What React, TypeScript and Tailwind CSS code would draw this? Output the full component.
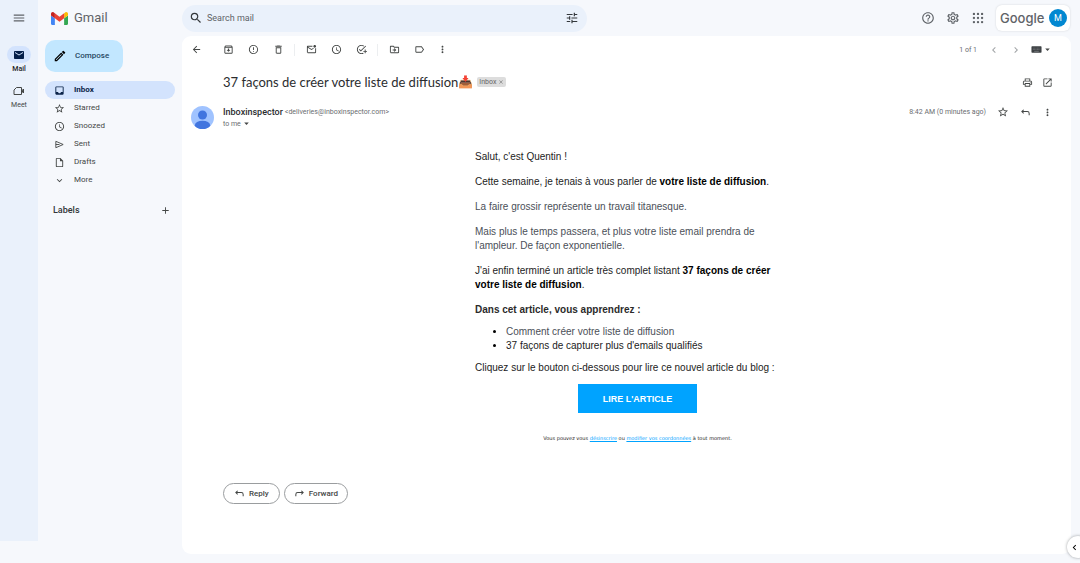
import type { ReactNode } from "react";
import type { IconType } from "react-icons";
import {
  MdAdd,
  MdArrowBack,
  MdArrowDropDown,
  MdChevronLeft,
  MdChevronRight,
  MdClose,
  MdExpandMore,
  MdInbox,
  MdMail,
  MdMenu,
  MdMoreVert,
  MdOpenInNew,
  MdOutlineAddTask,
  MdOutlineArchive,
  MdOutlineDelete,
  MdOutlineDriveFileMove,
  MdOutlineErrorOutline,
  MdOutlineHelpOutline,
  MdOutlineInsertDriveFile,
  MdOutlineLabel,
  MdOutlineMarkEmailUnread,
  MdOutlineModeEdit,
  MdOutlinePrint,
  MdOutlineSchedule,
  MdOutlineSettings,
  MdSearch,
  MdStarBorder,
  MdTune,
} from "react-icons/md";

const GmailLogo = () => (
  <svg viewBox="52 42 88 66" className="h-[13px] w-[17px]" aria-hidden="true">
    <path fill="#4285f4" d="M58 108h14V74L52 59v43c0 3.32 2.69 6 6 6" />
    <path fill="#34a853" d="M120 108h14c3.32 0 6-2.69 6-6V59l-20 15" />
    <path fill="#fbbc04" d="M120 48v26l20-15v-8c0-7.42-8.47-11.65-14.4-7.2" />
    <path fill="#ea4335" d="M72 74V48l24 18 24-18v26L96 92" />
    <path fill="#c5221f" d="M52 51v8l20 15V48l-5.6-4.2c-5.94-4.45-14.4-.22-14.4 7.2" />
  </svg>
);

const MeetIcon = () => (
  <svg viewBox="0 0 24 24" className="size-3" fill="none" stroke="#444746" strokeWidth="2" aria-hidden="true">
    <path d="M7 5h10v14H2V10z" strokeLinejoin="round" />
    <path d="M18 11l3-3v8l-3-3z" fill="#444746" strokeLinejoin="round" />
  </svg>
);

const SentIcon = ({ className }: { className?: string }) => (
  <svg
    viewBox="0 0 24 24"
    className={className}
    fill="none"
    stroke="currentColor"
    strokeWidth="2"
    strokeLinejoin="round"
    aria-hidden="true"
  >
    <path d="M4 5l16 7-16 7zM4 12h8" />
  </svg>
);

const AppsIcon = () => (
  <svg viewBox="0 0 24 24" className="size-[14px]" fill="currentColor" aria-hidden="true">
    {[5, 12, 19].map((y) => [5, 12, 19].map((x) => <circle key={`${x}-${y}`} cx={x} cy={y} r="2" />))}
  </svg>
);

const KeyboardIcon = () => (
  <svg viewBox="0 0 24 24" className="h-[11px] w-[11px]" aria-hidden="true">
    <rect x="1" y="5" width="22" height="14" rx="1.5" fill="#3c4043" />
    <path d="M4 9h16M4 12h16" stroke="#8d9093" strokeWidth="1.2" strokeDasharray="2 1" />
    <path d="M7 16h10" stroke="#8d9093" strokeWidth="1.4" />
  </svg>
);

const ReplyIcon = ({ flip = false }: { flip?: boolean }) => (
  <svg
    viewBox="0 0 24 24"
    className={flip ? "size-[11px] -scale-x-100" : "size-[11px]"}
    fill="none"
    stroke="currentColor"
    strokeWidth="2.2"
    aria-hidden="true"
  >
    <path d="M8 6L4 10l4 4M4 10h12a4 4 0 0 1 4 4v4" />
  </svg>
);

const Avatar = () => (
  <svg viewBox="0 0 24 24" className="size-[23px] shrink-0" aria-hidden="true">
    <clipPath id="avatar-disc">
      <circle cx="12" cy="12" r="12" />
    </clipPath>
    <g clipPath="url(#avatar-disc)">
      <rect width="24" height="24" fill="#a0c3ff" />
      <circle cx="12" cy="9.4" r="4.7" fill="#4175df" />
      <ellipse cx="12" cy="20" rx="8" ry="4.6" fill="#4175df" />
    </g>
  </svg>
);

const folders: { name: string; icon: IconType | typeof SentIcon }[] = [
  { name: "Inbox", icon: MdInbox },
  { name: "Starred", icon: MdStarBorder },
  { name: "Snoozed", icon: MdOutlineSchedule },
  { name: "Sent", icon: SentIcon },
  { name: "Drafts", icon: MdOutlineInsertDriveFile },
  { name: "More", icon: MdExpandMore },
];

const toolGroups: { label: string; icon: IconType }[][] = [
  [
    { label: "Archive", icon: MdOutlineArchive },
    { label: "Report spam", icon: MdOutlineErrorOutline },
    { label: "Delete", icon: MdOutlineDelete },
  ],
  [
    { label: "Mark as unread", icon: MdOutlineMarkEmailUnread },
    { label: "Snooze", icon: MdOutlineSchedule },
    { label: "Add to tasks", icon: MdOutlineAddTask },
  ],
  [
    { label: "Move to", icon: MdOutlineDriveFileMove },
    { label: "Labels", icon: MdOutlineLabel },
  ],
];

function IconButton({ label, className = "w-[25px]", children }: { label: string; className?: string; children: ReactNode }) {
  return (
    <button type="button" aria-label={label} className={`flex h-5 shrink-0 items-center justify-center ${className}`}>
      {children}
    </button>
  );
}

function Rail() {
  return (
    <nav aria-label="Apps" className="mb-[22px] flex w-[38px] shrink-0 flex-col items-center bg-[#eaf1fb]">
      <IconButton label="Main menu" className="mt-2 w-6">
        <MdMenu className="size-[14px] text-[#5f6368]" />
      </IconButton>
      <a href="#mail" className="mt-[18px] flex flex-col items-center text-[7px] leading-[10px] font-medium text-[#1f1f1f]">
        <span className="mb-px flex h-[17px] w-6 items-center justify-center rounded-full bg-[#d3e3fd]">
          <MdMail className="size-3 text-[#041e49]" />
        </span>
        Mail
      </a>
      <a href="#meet" className="mt-2 flex flex-col items-center text-[7px] leading-[10px] text-[#444746]">
        <span className="mb-px flex h-[17px] w-6 items-center justify-center">
          <MeetIcon />
        </span>
        Meet
      </a>
    </nav>
  );
}

function Sidebar() {
  return (
    <aside className="flex w-36 shrink-0 flex-col px-[7px]">
      <a href="#home" className="flex h-9 items-center gap-[6px] pl-[6px] text-[13px] text-[#5f6368]">
        <GmailLogo />
        Gmail
      </a>
      <button
        type="button"
        className="mt-1 flex h-8 w-[78px] items-center gap-2 rounded-[10px] bg-[#c2e7ff] pl-2 text-[8px] font-medium text-[#27485f]"
      >
        <MdOutlineModeEdit className="size-[14px] text-black" />
        Compose
      </button>
      <nav aria-label="Folders" className="mt-[9px] flex flex-col">
        {folders.map(({ name, icon: Icon }, i) => (
          <a
            key={name}
            href={`#${name.toLowerCase()}`}
            className={
              i === 0
                ? "flex h-[18px] items-center gap-[9px] rounded-full bg-[#d3e3fd] pl-[9px] text-[8px] leading-[10px] font-bold text-[#0b2349]"
                : "flex h-[18px] items-center gap-[9px] rounded-full pl-[9px] text-[8px] leading-[10px] text-[#444746]"
            }
          >
            <Icon className="size-[11px]" />
            {name}
          </a>
        ))}
      </nav>
      <div className="mt-[11px] flex h-5 items-center justify-between pr-1 pl-2">
        <h2 className="text-[9px] leading-3 font-medium text-[#333638]">Labels</h2>
        <IconButton label="Create new label" className="w-3">
          <MdAdd className="size-[11px] text-[#444746]" />
        </IconButton>
      </div>
    </aside>
  );
}

function Header() {
  return (
    <header className="flex h-9 items-center justify-between pr-[10px]">
      <form role="search" className="flex h-[27px] w-[405px] items-center rounded-full bg-[#eaf1fb] pr-2 pl-[7px]">
        <MdSearch className="size-[14px] shrink-0 text-[#33373b]" />
        <input
          type="search"
          aria-label="Search mail"
          placeholder="Search mail"
          className="min-w-0 flex-1 bg-transparent px-1 text-[9px] leading-3 outline-none placeholder:text-[#5f6368]"
        />
        <MdTune className="size-[14px] text-[#33373b]" />
      </form>
      <div className="flex items-center text-[#5f6368]">
        <IconButton label="Support">
          <MdOutlineHelpOutline className="size-[14px]" />
        </IconButton>
        <IconButton label="Settings">
          <MdOutlineSettings className="size-[14px]" />
        </IconButton>
        <IconButton label="Google apps">
          <AppsIcon />
        </IconButton>
        <a
          href="#account"
          className="ml-[6px] flex h-[26px] w-[74px] items-center justify-between rounded-md bg-white pr-[3px] pl-1 shadow-[0_0_2px_rgba(60,64,67,0.2)]"
        >
          <span className="font-['Inter'] text-[13px] leading-4 font-medium">Google</span>
          <span className="flex size-[18px] items-center justify-center rounded-full bg-[#0288d1] text-[9px] leading-3 text-white">M</span>
        </a>
      </div>
    </header>
  );
}

function Toolbar() {
  return (
    <div className="flex h-[27px] items-center justify-between pr-[18px] pl-1 text-[#444746]">
      <div className="flex items-center">
        <IconButton label="Back" className="mr-[10px] w-5">
          <MdArrowBack className="size-[11px]" />
        </IconButton>
        {toolGroups.map((group, g) => (
          <div key={g} className={g === 0 ? "flex" : "ml-[3px] flex h-3 items-center border-l border-[#eceef0] pl-1"}>
            {group.map(({ label, icon: Icon }) => (
              <IconButton key={label} label={label}>
                <Icon className="size-[11px]" />
              </IconButton>
            ))}
          </div>
        ))}
        <IconButton label="More" className="w-5">
          <MdMoreVert className="size-[11px]" />
        </IconButton>
      </div>
      <div className="flex items-center">
        <span className="mr-[6px] text-[7px] leading-[10px] text-[#6a6d70]">1 of 1</span>
        <IconButton label="Newer" className="w-[22px]">
          <MdChevronLeft className="size-3 text-[#a0a3a6]" />
        </IconButton>
        <IconButton label="Older" className="w-[22px]">
          <MdChevronRight className="size-3 text-[#a0a3a6]" />
        </IconButton>
        <IconButton label="Input tools" className="ml-1 w-[22px]">
          <KeyboardIcon />
          <MdArrowDropDown className="size-[11px]" />
        </IconButton>
      </div>
    </div>
  );
}

function EmailBody() {
  return (
    <div className="pr-[19px] pl-[41px]">
      <div className="mx-auto mt-[21px] w-[325px] font-['Liberation_Sans',sans-serif] text-[10px] leading-[14px] text-[#1c1c1c]">
        <div className="flex flex-col gap-[11px] pr-4">
          <p>Salut, c'est Quentin !</p>
          <p>
            Cette semaine, je tenais à vous parler de <b className="text-black">votre liste de diffusion</b>.
          </p>
          <p className="text-[#4b4f58]">La faire grossir représente un travail titanesque.</p>
          <p className="text-[#4b4f58]">
            Mais plus le temps passera, et plus votre liste email prendra de l'ampleur. De façon exponentielle.
          </p>
          <p>
            J'ai enfin terminé un article très complet listant{" "}
            <b className="text-black">37 façons de créer votre liste de diffusion</b>.
          </p>
          <p className="font-bold text-[#2b2b2b]">Dans cet article, vous apprendrez :</p>
        </div>
        <ul className="my-2 list-disc pl-[31px] marker:text-black">
          <li className="text-[#4b4f58]">Comment créer votre liste de diffusion</li>
          <li>37 façons de capturer plus d'emails qualifiés</li>
        </ul>
        <p>Cliquez sur le bouton ci-dessous pour lire ce nouvel article du blog :</p>
        <a
          href="#article"
          className="mx-auto mt-[9px] flex h-[29px] w-[119px] items-center justify-center bg-[#00a3ff] text-[9px] font-bold text-white"
        >
          LIRE L'ARTICLE
        </a>
        <p className="mt-[18px] text-center font-['DejaVu_Sans',sans-serif] text-[5px] text-[#1c1c1c]">
          Vous pouvez vous{" "}
          <a href="#unsubscribe" className="text-[#00a3ff] underline">
            désinscrire
          </a>{" "}
          ou{" "}
          <a href="#details" className="text-[#00a3ff] underline">
            modifier vos coordonnées
          </a>{" "}
          à tout moment.
        </p>
      </div>
    </div>
  );
}

function Message() {
  return (
    <main className="mr-[9px] mb-[9px] flex-1 rounded-[9px] bg-white">
      <Toolbar />
      <div className="flex h-[38px] items-center justify-between pr-[14px] pl-[41px]">
        <div className="flex items-center">
          <h1 className="flex items-center font-['Lato'] text-[13px] leading-4 text-[#2b2d2f]">
            37 façons de créer votre liste de diffusion
            <span className="text-[12px]">📥</span>
          </h1>
          <span className="ml-1 flex h-[10px] items-center gap-[2px] rounded-[2px] bg-[#dddddd] px-[2px] text-[7px] leading-[10px] text-[#666666]">
            Inbox
            <button type="button" aria-label="Remove label Inbox">
              <MdClose className="size-[6px]" />
            </button>
          </span>
        </div>
        <div className="flex text-[#444746]">
          <IconButton label="Print all" className="w-5">
            <MdOutlinePrint className="size-[11px]" />
          </IconButton>
          <IconButton label="Open in new window" className="w-5">
            <MdOpenInNew className="size-[11px]" />
          </IconButton>
        </div>
      </div>
      <div className="flex gap-2 pt-[5px] pr-[13px] pl-[9px]">
        <Avatar />
        <div className="flex-1 pl-[1px]">
          <div className="flex h-3 items-center gap-[2px]">
            <h2 className="text-[9px] leading-3 font-medium text-[#2b2d2f]">Inboxinspector</h2>
            <span className="text-[7px] leading-[10px] text-[#6a6d70]">&lt;deliveries@inboxinspector.com&gt;</span>
          </div>
          <button type="button" className="flex h-[11px] items-center text-[7px] leading-[10px] text-[#6a6d70]">
            to me
            <MdArrowDropDown className="size-[11px] text-[#444746]" />
          </button>
        </div>
        <div className="flex h-3 items-center text-[#444746]">
          <span className="mr-[6px] text-[7px] leading-[10px] text-[#6a6d70]">8:42 AM (0 minutes ago)</span>
          <IconButton label="Star" className="w-[22px]">
            <MdStarBorder className="size-3" />
          </IconButton>
          <IconButton label="Reply" className="w-[22px]">
            <ReplyIcon />
          </IconButton>
          <IconButton label="More" className="w-[22px]">
            <MdMoreVert className="size-[11px]" />
          </IconButton>
        </div>
      </div>
      <EmailBody />
      <div className="mt-[38px] flex gap-1 pl-[41px] text-[8px] leading-[10px] font-medium text-[#444746]">
        <button type="button" className="flex h-[21px] items-center gap-1 rounded-full border border-[#9a9d9f] px-[10px]">
          <ReplyIcon />
          Reply
        </button>
        <button type="button" className="flex h-[21px] items-center gap-1 rounded-full border border-[#9a9d9f] px-[9px]">
          <ReplyIcon flip />
          Forward
        </button>
      </div>
    </main>
  );
}

export default function App() {
  return (
    <div className="relative flex min-h-screen overflow-hidden bg-[#f6f8fc] font-['Roboto',sans-serif]">
      <Rail />
      <Sidebar />
      <div className="flex min-w-0 flex-1 flex-col">
        <Header />
        <Message />
      </div>
      <button
        type="button"
        aria-label="Show side panel"
        className="absolute -right-[9px] bottom-[5px] flex size-[22px] items-center rounded-full bg-white pl-[2px] shadow-[0_0_3px_rgba(60,64,67,0.5)]"
      >
        <MdChevronLeft className="size-[11px] text-black" />
      </button>
    </div>
  );
}
